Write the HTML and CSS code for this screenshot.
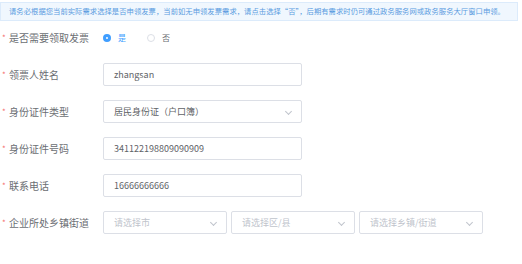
FILE: index.html
```html
<!DOCTYPE html>
<html lang="zh-CN">
<head>
    <meta charset="UTF-8">
    <title>发票申领</title>
    <link rel="stylesheet" href="styles.css">
</head>
<body>
    <div class="tip">请务必根据您当前实际需求选择是否申领发票，当前如无申领发票需求，请点击选择“否”，后期有需求时仍可通过政务服务网或政务服务大厅窗口申领。</div>
    <form class="form">
        <!-- 是否领取 -->
        <div class="row">
            <label class="label">是否需要领取发票</label>
            <div class="radios">
                <span class="radio checked"><i></i>是</span>
                <span class="radio"><i></i>否</span>
            </div>
        </div>
        <div class="row">
            <label class="label">领票人姓名</label>
            <div class="input">zhangsan</div>
        </div>
        <div class="row">
            <label class="label">身份证件类型</label>
            <div class="input select">居民身份证（户口簿）<span class="arrow"></span></div>
        </div>
        <div class="row">
            <label class="label">身份证件号码</label>
            <div class="input">341122198809090909</div>
        </div>
        <div class="row">
            <label class="label">联系电话</label>
            <div class="input">16666666666</div>
        </div>
        <!-- 乡镇街道 -->
        <div class="row">
            <label class="label">企业所处乡镇街道</label>
            <div class="selects">
                <div class="input select small placeholder">请选择市<span class="arrow"></span></div>
                <div class="input select small placeholder">请选择区/县<span class="arrow"></span></div>
                <div class="input select small placeholder">请选择乡镇/街道<span class="arrow"></span></div>
            </div>
        </div>
    </form>
</body>
</html>
```
FILE: styles.css
```css
body {
    margin: 0;
    background: #fff;
    font-family: "Noto Sans CJK SC", "Liberation Sans", sans-serif;
    color: #606266;
}
.tip {
    margin: 2px 4px 0 0;
    height: 17px;
    line-height: 17px;
    padding-left: 8px;
    border: 1px solid #dcebfb;
    background-color: #f0f7fe;
    color: #5a9be0;
    font-size: 7.3px;
    letter-spacing: 0.05px;
    white-space: nowrap;
    overflow: hidden;
}
.form {
    margin-top: 5px;
    display: flex;
    flex-direction: column;
    gap: 14px;
}
.row {
    display: flex;
    align-items: center;
    height: 23px;
}
.label {
    width: 94px;
    padding-left: 9px;
    font-size: 10px;
    color: #6b6e73;
    position: relative;
}
.label::before {
    content: "*";
    color: #f56c6c;
    position: absolute;
    left: 2px;
    top: 2px;
    font-size: 8px;
}
.radios {
    display: flex;
    align-items: center;
    gap: 21px;
    font-size: 8px;
}
.radio {
    display: flex;
    align-items: center;
    gap: 7px;
    color: #6b6e73;
}
.radio i {
    width: 6px;
    height: 6px;
    border: 1px solid #dcdfe6;
    border-radius: 50%;
    box-sizing: content-box;
}
.radio.checked {
    color: #409eff;
}
.radio.checked i {
    width: 2px;
    height: 2px;
    border: 3px solid #409eff;
    background: #fff;
}
.input {
    width: 187px;
    height: 21px;
    border: 1px solid #dcdfe6;
    border-radius: 2px;
    line-height: 21px;
    padding-left: 10px;
    box-sizing: content-box;
    font-size: 9px;
    color: #606266;
    position: relative;
}
.input.select {
    width: 187px;
}
.selects {
    display: flex;
    gap: 4px;
}
.input.small {
    width: 112px;
}
.placeholder {
    color: #c0c4cc;
}
.arrow {
    position: absolute;
    right: 10px;
    top: 8px;
    width: 4px;
    height: 4px;
    border-right: 1px solid #c0c4cc;
    border-bottom: 1px solid #c0c4cc;
    transform: rotate(45deg);
}
```
